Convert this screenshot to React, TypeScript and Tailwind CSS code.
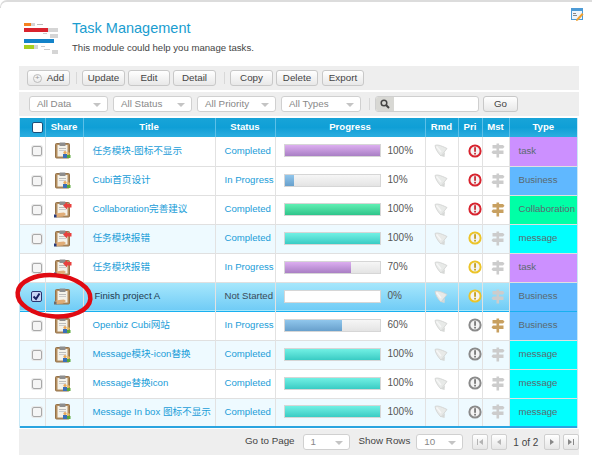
import React from "react";

function Logo() {
  return (
    <svg width="36" height="34" viewBox="0 0 36 34" className="shrink-0">
      <rect x="0" y="1" width="7" height="3" fill="#f58220" />
      <rect x="7" y="1" width="4" height="3" fill="#d5d5d5" />
      <rect x="13" y="2" width="6" height="1" fill="#bbb" />
      <rect x="0" y="6" width="24" height="4" fill="#d9232e" />
      <rect x="24" y="6" width="10" height="4" fill="#d5d5d5" />
      <rect x="19" y="11" width="4" height="1" fill="#ccc" />
      <rect x="26" y="12" width="8" height="4" fill="#d5d5d5" />
      <rect x="0" y="17" width="30" height="4" fill="#1383c9" />
      <rect x="0" y="23" width="10" height="4" fill="#a6cf1e" />
      <rect x="10" y="23" width="4" height="4" fill="#d5d5d5" />
      <rect x="17" y="24" width="4" height="1" fill="#ccc" />
      <rect x="20" y="27" width="6" height="1" fill="#ccc" />
      <rect x="28" y="28" width="6" height="4" fill="#d5d5d5" />
    </svg>
  );
}

function EditWin() {
  return (
    <svg width="13" height="13" viewBox="0 0 13 13">
      <rect x="0.5" y="0.5" width="11" height="11" fill="#eef5fb" stroke="#4d9bd6" />
      <rect x="0" y="0" width="12" height="3" fill="#4d9bd6" />
      <rect x="2" y="5" width="3" height="1" fill="#888" />
      <rect x="2" y="7" width="4" height="1" fill="#888" />
      <path d="M11 5 L12.5 6.5 L7 12.5 L5 13 L5.5 11 Z" fill="#f0a030" />
    </svg>
  );
}

function Clipboard({ kind }: { kind: "people" | "arrow" | "hand" }) {
  return (
    <svg width="18" height="18" viewBox="0 0 18 18" className="ml-[8px] block">
      <rect x="1.5" y="1.5" width="14" height="14.5" rx="1" fill="#b58f60" stroke="#94724a" />
      <rect x="3.5" y="3" width="10" height="11.5" fill="#f4f2ea" />
      <rect x="5" y="6" width="7" height="1" fill="#bcbcbc" />
      <rect x="5" y="8" width="7" height="1" fill="#cccccc" />
      <rect x="5.5" y="0.5" width="6" height="3.5" rx="0.5" fill="#8e8e8e" />
      {kind === "people" && (
        <>
          <circle cx="11" cy="10.5" r="1.6" fill="#e9a85c" />
          <rect x="9" y="12" width="4" height="4" fill="#3a6fb8" />
          <circle cx="14.5" cy="11.5" r="1.3" fill="#e9c05c" />
          <rect x="13" y="13" width="3.5" height="3" fill="#59a83a" />
        </>
      )}
      {kind === "arrow" && (
        <>
          <path d="M9 4.5 L13 1 L13 3 L17.5 3 L17.5 6.5 L13 6.5 L13 8.5 Z" fill="#e8413e" />
          <path d="M1 13 L5 12 L10 11.5 L12 13 L9 15.5 L3 16 L1 16 Z" fill="#e0ad78" />
          <rect x="0" y="13.5" width="2.5" height="3" fill="#25397a" />
        </>
      )}
      {kind === "hand" && (
        <>
          <path d="M1 13 L5 12 L10 11.5 L12 13 L9 15.5 L3 16 L1 16 Z" fill="#e0ad78" />
          <rect x="0" y="13.5" width="2.5" height="3" fill="#6d6d6d" />
        </>
      )}
    </svg>
  );
}

function Bell() {
  return (
    <svg width="14" height="14" viewBox="0 0 14 14" className="ml-[8px] block">
      <path d="M1 1.5 C3 0.5 6 1 13 4.5 L7 12 C3.5 8.5 1.5 5 1 1.5 Z" fill="#e8eae8" stroke="#cfd1cf" strokeWidth="0.8" />
      <path d="M7 12 L10.5 13 L11 8 Z" fill="#d6d8d6" />
      <path d="M2.5 2.5 L7 8" stroke="#f6f6f6" strokeWidth="1.5" />
    </svg>
  );
}

function Pri({ c }: { c: "red" | "yellow" | "gray" }) {
  const ring = c === "red" ? "#d8232e" : c === "yellow" ? "#ecc428" : "#8a8a8a";
  const mark = c === "red" ? "#c8202a" : c === "yellow" ? "#c09a10" : "#707070";
  return (
    <svg width="14" height="14" viewBox="0 0 14 14" className="-mt-[1px] ml-[9px] block">
      <circle cx="7" cy="7" r="5.6" fill="#f4f4f4" stroke={ring} strokeWidth="2" />
      <rect x="6.2" y="3.2" width="1.7" height="4.6" fill={mark} />
      <rect x="6.2" y="8.8" width="1.7" height="1.7" fill={mark} />
    </svg>
  );
}

function Mst({ brown }: { brown?: boolean }) {
  const c = brown ? "#c8a060" : "#cccccc";
  return (
    <svg width="14" height="15" viewBox="0 0 14 15" className="-mt-[1px] ml-[8px] block">
      <rect x="5.5" y="0.5" width="2.6" height="14" fill={c} />
      <path d="M1.5 2 H12 L13.5 3.8 L12 5.5 H1.5 Z" fill={c} />
      <path d="M12.5 7.5 H2 L0.5 9.2 L2 11 H12.5 Z" fill={c} />
    </svg>
  );
}

function Check({ checked }: { checked?: boolean }) {
  if (checked) {
    return (
      <svg width="11" height="11" viewBox="0 0 11 11" className="ml-[11px] block">
        <rect x="0.5" y="0.5" width="10" height="10" rx="1.5" fill="#c8d4f4" stroke="#2a3470" />
        <path d="M2.5 5.5 L5 8 L8.5 2.5" fill="none" stroke="#182060" strokeWidth="2" />
      </svg>
    );
  }
  return (
    <span className="ml-[12px] block h-[10px] w-[10px] rounded-[2px] border border-[#a8a8a8] bg-[#f5f5f5] shadow-[0_0_0_1px_#e8e8e8]" />
  );
}

function Btn({ w, children, ml }: { w: string; children: React.ReactNode; ml?: string }) {
  return (
    <button className={`flex h-[16px] items-center justify-center rounded-[3px] border border-[#c8c8c8] bg-gradient-to-b from-white to-[#e8e8e8] text-[9.8px] text-[#444] ${w} ${ml ?? ""}`}>
      {children}
    </button>
  );
}

function Drop({ w, label, color = "text-[#888]" }: { w: string; label: string; color?: string }) {
  return (
    <div className={`flex h-[16px] items-center justify-between rounded-[3px] border border-[#d0d0d0] bg-white pl-[7px] pr-[6px] text-[9.8px] ${color} ${w}`}>
      <span>{label}</span>
      <span className="mt-[1px] h-0 w-0 border-x-[4px] border-t-[4px] border-x-transparent border-t-[#c4c4c4]" />
    </div>
  );
}

function Pager({ d, on, ml }: { d: string; on?: boolean; ml?: string }) {
  return (
    <div className={`flex h-[16px] w-[16px] items-center justify-center rounded-[2px] border border-[#cfcfcf] bg-gradient-to-b from-white to-[#e6e6e6] ${ml ?? ""}`}>
      <svg width="8" height="8" viewBox="0 0 8 8">
        <path d={d} fill={on ? "#888" : "#b4b4b4"} />
      </svg>
    </div>
  );
}

const BARS: Record<string, string> = {
  purple: "from-[#dcaef0] to-[#a97fc4]",
  blue: "from-[#90c6ec] to-[#68a0cc]",
  green: "from-[#60f0b4] to-[#2ec48a]",
  cyan: "from-[#70f0e4] to-[#38ccc4]",
};

const TYPES: Record<string, string> = {
  task: "bg-[#cc90ff]",
  Business: "bg-[#60b8ff]",
  Collaboration: "bg-[#00ffa6]",
  message: "bg-[#00ffff]",
};

type Row = {
  title: string;
  status: string;
  bar: string;
  pct: number;
  pri: "red" | "yellow" | "gray";
  brown?: boolean;
  type: string;
  icon: "people" | "arrow" | "hand";
  alt?: boolean;
  sel?: boolean;
};

const rows: Row[] = [
  { title: "任务模块-图标不显示", status: "Completed", bar: "purple", pct: 100, pri: "red", type: "task", icon: "people" },
  { title: "Cubi首页设计", status: "In Progress", bar: "blue", pct: 10, pri: "red", type: "Business", icon: "people" },
  { title: "Collaboration完善建议", status: "Completed", bar: "green", pct: 100, pri: "red", brown: true, type: "Collaboration", icon: "arrow" },
  { title: "任务模块报错", status: "Completed", bar: "cyan", pct: 100, pri: "yellow", type: "message", icon: "arrow", alt: true },
  { title: "任务模块报错", status: "In Progress", bar: "purple", pct: 70, pri: "yellow", type: "task", icon: "arrow" },
  { title: "Finish project A", status: "Not Started", bar: "blue", pct: 0, pri: "yellow", type: "Business", icon: "hand", sel: true },
  { title: "Openbiz Cubi网站", status: "In Progress", bar: "blue", pct: 60, pri: "gray", brown: true, type: "Business", icon: "people" },
  { title: "Message模块-icon替换", status: "Completed", bar: "cyan", pct: 100, pri: "gray", type: "message", icon: "people", alt: true },
  { title: "Message替换icon", status: "Completed", bar: "cyan", pct: 100, pri: "gray", type: "message", icon: "people" },
  { title: "Message In box 图标不显示", status: "Completed", bar: "cyan", pct: 100, pri: "gray", type: "message", icon: "people", alt: true },
];

const th = "h-[19px] border-r border-[#5cc0e8] p-0 text-center text-[9.6px] font-bold text-white";
const td = "border-r border-[#e2e2e2] p-0";

export default function App() {
  return (
    <div className="relative h-[463px] w-[592px] overflow-hidden bg-white font-['Liberation_Sans','Noto_Sans_CJK_SC',sans-serif]">
      <div className="h-[8px] rounded-tl-[7px] border-l border-t-2 border-[#dcdcdc]" />
      <div className="flex h-[58px] pl-[24px] pt-[14px]">
        <Logo />
        <div className="ml-[12px] -mt-[3px]">
          <div className="text-[14.5px] leading-[18px] text-[#1a9dd0]">Task Management</div>
          <div className="mt-[5px] text-[9.6px] leading-[12px] text-[#444]">This module could help you manage tasks.</div>
        </div>
        <div className="ml-auto mr-[8px] -mt-[14px]">
          <EditWin />
        </div>
      </div>

      <div className="ml-[19px] flex h-[24px] w-[560px] items-center bg-[#eeeeee] pl-[8px]">
        <Btn w="w-[43px]">
          <span className="mr-[5px] flex h-[9px] w-[9px] items-center justify-center rounded-full border border-[#bbb] text-[8px] leading-none text-[#999]">+</span>
          Add
        </Btn>
        <div className="ml-[6px] h-[12px] w-px bg-[#d8d8d8]" />
        <Btn w="w-[43px]" ml="ml-[5px]">Update</Btn>
        <Btn w="w-[42px]" ml="ml-[3px]">Edit</Btn>
        <Btn w="w-[43px]" ml="ml-[3px]">Detail</Btn>
        <div className="ml-[8px] h-[12px] w-px bg-[#d8d8d8]" />
        <Btn w="w-[43px]" ml="ml-[5px]">Copy</Btn>
        <Btn w="w-[42px]" ml="ml-[3px]">Delete</Btn>
        <Btn w="w-[42px]" ml="ml-[4px]">Export</Btn>
      </div>

      <div className="ml-[19px] mt-[2px] flex h-[24px] w-[560px] items-center bg-[#eeeeee] pl-[10px]">
        <Drop w="w-[79px]" label="All Data" />
        <Drop w="w-[79px] ml-[5px]" label="All Status" />
        <Drop w="w-[79px] ml-[5px]" label="All Priority" />
        <Drop w="w-[80px] ml-[5px]" label="All Types" />
        <div className="ml-[8px] h-[12px] w-px bg-[#d8d8d8]" />
        <div className="ml-[5px] flex h-[16px] w-[104px] overflow-hidden rounded-[3px] border border-[#cfcfcf] bg-white">
          <div className="flex w-[18px] items-center justify-center bg-[#d8d8d4]">
            <svg width="10" height="10" viewBox="0 0 10 10">
              <circle cx="4" cy="4" r="2.8" fill="none" stroke="#444" strokeWidth="1.5" />
              <path d="M6 6 L9 9" stroke="#444" strokeWidth="2" />
            </svg>
          </div>
        </div>
        <Btn w="w-[35px]" ml="ml-[4px]">Go</Btn>
      </div>

      <div className="ml-[19px] mt-[2px] w-[559px] border-l border-r-2 border-[#c8e8f6]">
        <table className="w-[557px] table-fixed">
          <colgroup>
            <col className="w-[25px]" />
            <col className="w-[38px]" />
            <col className="w-[132px]" />
            <col className="w-[60px]" />
            <col className="w-[150px]" />
            <col className="w-[33px]" />
            <col className="w-[24px]" />
            <col className="w-[27px]" />
            <col className="w-[68px]" />
          </colgroup>
          <thead>
            <tr className="bg-gradient-to-b from-[#18a4d8] via-[#0f9fd6] to-[#2aaee0]">
              <th className={th}>
                <span className="ml-[12px] block h-[11px] w-[11px] rounded-[2px] border border-[#1b4f7a] bg-white" />
              </th>
              <th className={th}>Share</th>
              <th className={th}>Title</th>
              <th className={th}>Status</th>
              <th className={th}>Progress</th>
              <th className={th}>Rmd</th>
              <th className={th}>Pri</th>
              <th className={th}>Mst</th>
              <th className="h-[19px] p-0 text-center text-[9.6px] font-bold text-white">Type</th>
            </tr>
          </thead>
          <tbody>
            {rows.map((r, i) => (
              <tr
                key={i}
                className={`h-[29px] border-b ${
                  r.sel
                    ? "border-[#18b0f0] bg-gradient-to-b from-[#a8e8fc] to-[#70ccf6]"
                    : r.alt
                      ? "border-[#e0e0e0] bg-[#eefaff]"
                      : "border-[#e0e0e0] bg-white"
                } ${i === rows.length - 1 ? "border-b-2 border-b-[#2aa4e0]" : ""}`}
              >
                <td className={td}>
                  <Check checked={r.sel} />
                </td>
                <td className={td}>
                  <Clipboard kind={r.icon} />
                </td>
                <td className={`${td} overflow-hidden whitespace-nowrap text-[9.6px] ${r.sel ? "pl-[11px] text-[#223a50]" : "pl-[9px] text-[#1a9dd8]"}`}>
                  {r.title}
                </td>
                <td className={`${td} whitespace-nowrap pl-[9px] text-[9.6px] ${r.sel ? "text-[#3a4a58]" : "text-[#1a9dd8]"}`}>
                  {r.status}
                </td>
                <td className={td}>
                  <div className="-mt-[1px] flex items-center pl-[8px]">
                    <div className={`h-[13px] w-[97px] border border-[#d6d6d6] ${r.sel ? "bg-white" : "bg-gradient-to-b from-[#f6f6f6] to-[#e4e4e4]"}`}>
                      <div className={`h-full bg-gradient-to-b ${BARS[r.bar]}`} style={{ width: `${r.pct}%` }} />
                    </div>
                    <span className="ml-[7px] -mt-[1px] text-[10px] text-[#555]">{r.pct}%</span>
                  </div>
                </td>
                <td className={td}>
                  <Bell />
                </td>
                <td className={td}>
                  <Pri c={r.pri} />
                </td>
                <td className={td}>
                  <Mst brown={r.brown} />
                </td>
                <td className={`p-0 ${TYPES[r.type]}`}>
                  <div className="overflow-hidden whitespace-nowrap pl-[9px] text-[9.6px] text-[#5a6a70]">{r.type}</div>
                </td>
              </tr>
            ))}
          </tbody>
        </table>
      </div>

      <div className="ml-[19px] mt-[1px] flex h-[26px] w-[560px] items-center whitespace-nowrap bg-[#eeeeee] pl-[226px] text-[9.8px] text-[#444]">
        <span className="-mt-[2px]">Go to Page</span>
        <Drop w="w-[47px] ml-[8px] shrink-0" label="1" />
        <span className="-mt-[2px] ml-[9px]">Show Rows</span>
        <Drop w="w-[47px] ml-[6px] shrink-0" label="10" />
        <Pager ml="ml-[9px] shrink-0" d="M1 1 H2 V7 H1 Z M7 1 V7 L3 4 Z" />
        <Pager ml="ml-[3px] shrink-0" d="M6 1 V7 L2 4 Z" />
        <span className="ml-[6px] text-[10px]">1 of 2</span>
        <Pager on ml="ml-[6px] shrink-0" d="M2 1 V7 L6 4 Z" />
        <Pager on ml="ml-[3px] shrink-0" d="M1 1 V7 L5 4 Z M6 1 H7 V7 H6 Z" />
      </div>

      <svg className="pointer-events-none absolute left-[14px] top-[271px]" width="82" height="50" viewBox="0 0 82 50">
        <ellipse cx="40" cy="24.8" rx="36.5" ry="20.5" transform="rotate(5 40 24.8)" fill="none" stroke="#e00a12" strokeWidth="4.5" />
      </svg>
    </div>
  );
}
